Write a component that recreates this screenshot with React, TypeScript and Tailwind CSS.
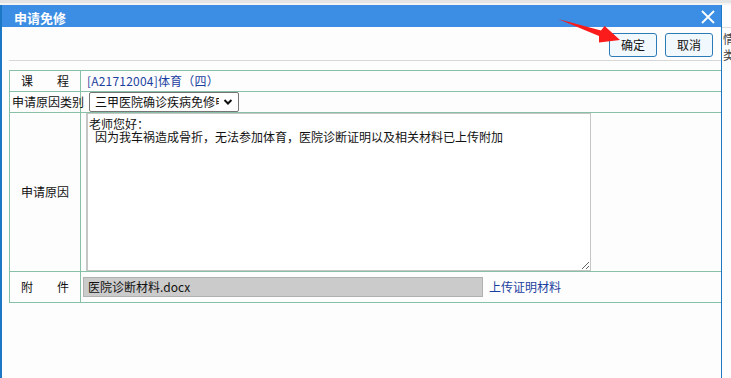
import React from "react";

const cjk = { fontFamily: '"Noto Sans CJK SC", "Noto Sans", sans-serif' };

export default function App() {
  return (
    <div
      className="relative w-[731px] h-[378px] overflow-hidden bg-[#fdfdfd] text-[12px] text-[#111]"
      style={cjk}
    >
      <div className="h-[3px] bg-[#e4e4e4]" />
      <div className="h-[2px] bg-[#f4f4f4]" />
      <div className="flex h-[373px]">
        {/* dialog window */}
        <div className="w-[722px] shrink-0 flex flex-col border-l-2 border-r border-[#1c78c4] bg-[#fdfdfd]">
          {/* title bar */}
          <div className="h-[22px] bg-[#3b8ee3] flex items-center justify-between pl-[12px] pr-[6px]">
            <span className="text-white font-bold text-[13px] leading-[13px] pt-[2px]">申请免修</span>
            <svg width="14" height="14" viewBox="0 0 14 14" className="mt-[1px]">
              <path d="M1 1 L13 13 M13 1 L1 13" stroke="#fff" strokeWidth="1.8" fill="none" />
            </svg>
          </div>
          {/* button bar */}
          <div className="h-[33px] flex justify-end items-start pt-[6px] pr-[8px] gap-[8px]">
            <button className="w-[48px] h-[24px] border border-[#2b7bb9] rounded-[3px] bg-[#f1f8fe] text-[12px] text-[#111] leading-none">
              确定
            </button>
            <button className="w-[48px] h-[24px] border border-[#2b7bb9] rounded-[3px] bg-[#f1f8fe] text-[12px] text-[#111] leading-none">
              取消
            </button>
          </div>
          <div className="ml-[7px] border-t border-[#d8d8d8]" />
          {/* form table */}
          <div className="ml-[7px] mt-[9px] border-l border-[#86c0a7]">
            {/* row 1 */}
            <div className="flex h-[21px] border-t border-[#86c0a7]">
              <div className="w-[71px] shrink-0 border-r border-[#86c0a7] flex items-center justify-center">
                课　　程
              </div>
              <div className="flex items-center pl-[6px] text-[#1b3f9f] tracking-[0.2px]">[A21712004]体育（四）</div>
            </div>
            {/* row 2 */}
            <div className="flex h-[21px] border-t border-[#86c0a7]">
              <div className="w-[71px] shrink-0 border-r border-[#86c0a7] flex items-center pl-[2px] whitespace-nowrap overflow-visible">
                申请原因类别
              </div>
              <div className="flex items-center pl-[8px]">
                <div className="w-[150px] h-[20px] border border-[#767676] rounded-[2px] bg-white flex items-center pl-[5px] pr-[5px]">
                  <span className="w-[125px] overflow-hidden whitespace-nowrap">三甲医院确诊疾病免修申请</span>
                  <svg width="10" height="8" viewBox="0 0 10 8" className="ml-[4px]">
                    <path d="M1.5 2 L5 5.5 L8.5 2" stroke="#111" strokeWidth="2" fill="none" />
                  </svg>
                </div>
              </div>
            </div>
            {/* row 3 */}
            <div className="flex h-[159px] border-t border-[#86c0a7]">
              <div className="w-[71px] shrink-0 border-r border-[#86c0a7] flex items-center justify-center">
                申请原因
              </div>
              <div className="pl-[5px]">
                <textarea
                  readOnly
                  className="block w-[505px] h-[158px] border border-l-2 border-[#c6c6c6] bg-white pl-[1px] pt-[3px] text-[12px] leading-[13px] text-[#111] outline-none"
                  style={cjk}
                  defaultValue={"老师您好：\n\u2002因为我车祸造成骨折，无法参加体育，医院诊断证明以及相关材料已上传附加"}
                />
              </div>
            </div>
            {/* row 4 */}
            <div className="flex h-[30px] border-t border-b border-[#86c0a7] box-content">
              <div className="w-[71px] shrink-0 border-r border-[#86c0a7] flex items-center justify-center">
                附　　件
              </div>
              <div className="flex items-center pl-[2px]">
                <div className="w-[400px] h-[20px] border border-[#b0b0b0] bg-[#cbcbcb] flex items-center pl-[4px]">
                  医院诊断材料.docx
                </div>
                <span className="ml-[6px] text-[#1b3f9f]">上传证明材料</span>
              </div>
            </div>
          </div>
        </div>
        {/* background page peeking on the right */}
        <div className="flex-1 min-w-0 overflow-hidden flex flex-col">
          <div className="h-[22px]" />
          <div className="border-t border-[#dcdcdc] pt-[3px] leading-[16px] text-[#444] whitespace-nowrap pl-[1px]">
            <div>情</div>
            <div>类</div>
          </div>
        </div>
      </div>
      {/* red annotation arrow */}
      <svg className="absolute left-0 top-0 pointer-events-none" width="731" height="378">
        <polygon
          points="558,19 601,30.4 604.6,26 620,40 599,42.5 599,36"
          fill="#fb1b1b"
        />
      </svg>
    </div>
  );
}
